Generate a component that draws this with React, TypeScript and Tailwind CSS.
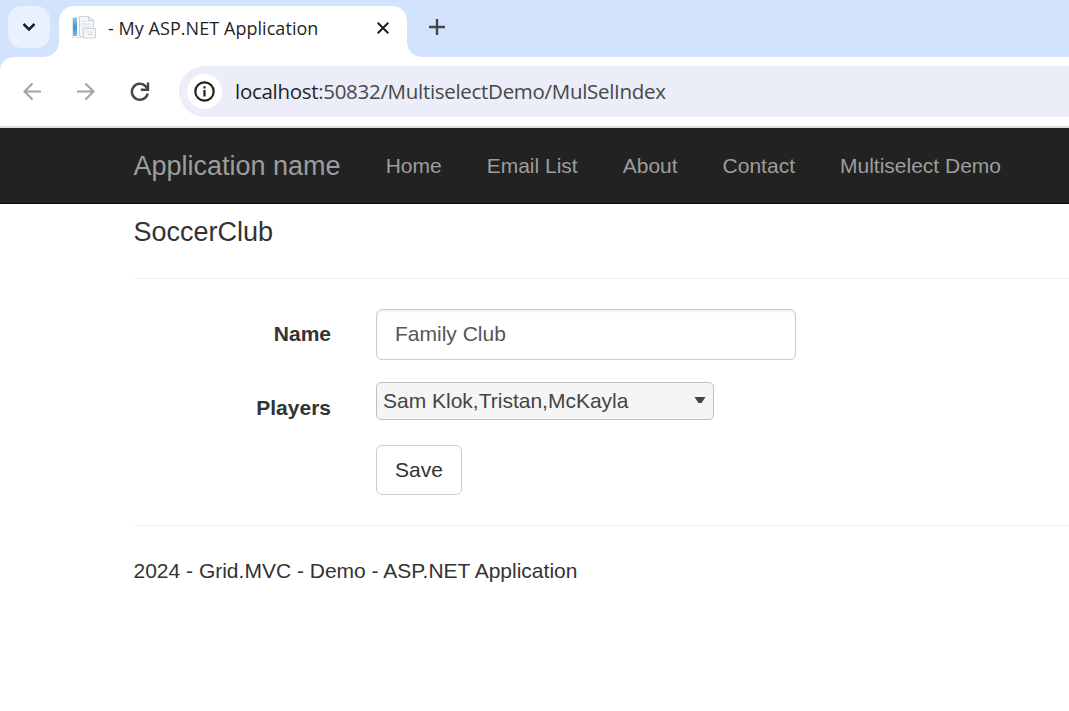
import React from "react";

const navItems = ["Home", "Email List", "About", "Contact", "Multiselect Demo"];

function Favicon() {
  return (
    <svg className="ml-[13px] shrink-0" width="24" height="26" viewBox="0 0 24 26" fill="none">
      <defs>
        <linearGradient id="spine" x1="0" y1="0" x2="0" y2="1">
          <stop offset="0" stopColor="#8cc6e6" />
          <stop offset="0.5" stopColor="#4493cb" />
          <stop offset="1" stopColor="#7cb8de" />
        </linearGradient>
      </defs>
      <rect x="0.5" y="2.5" width="13" height="20" fill="#f7f9fb" stroke="#e2e6ea" />
      <rect x="1" y="3" width="4" height="18" fill="url(#spine)" />
      <path d="M7.5 1.5h9l5 4v16h-14z" fill="#f5f6f8" stroke="#d0d4d9" />
      <path d="M16.5 1.5v4h5" stroke="#c9cdd2" />
      <path d="M9.5 6h5M9.5 9h9M9.5 12h9M9.5 15h2M9.5 18h1" stroke="#dcdfe3" />
      <path d="M11.5 13.500h12v9.500h-12z" fill="#f6f8fb" stroke="#ccd1d7" />
      <path d="M14 17h7M16 19.500h5" stroke="#d0d5da" />
    </svg>
  );
}

function TabStrip() {
  return (
    <div className="flex h-[57px] bg-[#d3e2fd]">
      <button className="mt-[6px] ml-2 flex h-[42px] w-[42px] shrink-0 items-center justify-center rounded-[14px] bg-[#e9f1fe]">
        <svg width="14" height="10" viewBox="0 0 14 10" fill="none">
          <path d="M1.500 2l5.500 5.500L12.500 2" stroke="#1f1f1f" strokeWidth="2.500" />
        </svg>
      </button>
      <div className="relative mt-[6px] ml-[9px] flex h-[51px] w-[348px] shrink-0 rounded-t-[15px] bg-white">
        <svg className="absolute bottom-0 -left-[15px]" width="15" height="15" viewBox="0 0 15 15">
          <path d="M15 0A15 15 0 0 1 0 15H15z" fill="#fff" />
        </svg>
        <svg className="absolute -right-[15px] bottom-0" width="15" height="15" viewBox="0 0 15 15">
          <path d="M0 0A15 15 0 0 0 15 15H0z" fill="#fff" />
        </svg>
        <div className="flex h-[43px] w-full items-center">
          <Favicon />
          <span className="ml-3 flex-1 whitespace-nowrap font-['Open_Sans','Noto_Sans',sans-serif] text-[18px] tracking-[0.05px] text-[#1f1f1f]">
            - My ASP.NET Application
          </span>
          <svg className="mr-[18px] shrink-0" width="12" height="12" viewBox="0 0 12 12">
            <path d="M0.700 0.700l10.600 10.600M11.300 0.700L0.700 11.300" stroke="#1f1f1f" strokeWidth="2" />
          </svg>
        </div>
      </div>
      <svg className="mt-[19px] ml-[22px] shrink-0" width="16" height="16" viewBox="0 0 16 16">
        <path d="M8 0v16M0 8h16" stroke="#444746" strokeWidth="2.400" />
      </svg>
    </div>
  );
}

function Toolbar() {
  return (
    <div className="bg-[#d3e2fd]">
      <div className="flex h-[71px] items-center rounded-tl-[14px] border-b-2 border-[#dedfe1] bg-white">
        <svg className="ml-[23px] shrink-0" width="19" height="18" viewBox="0 0 19 18" fill="none">
          <path d="M18 8.500H1.800M9.500 0.500L1.500 8.500l8 8" stroke="#a3a4a5" strokeWidth="2.200" />
        </svg>
        <svg className="ml-[35px] shrink-0" width="19" height="18" viewBox="0 0 19 18" fill="none">
          <path d="M0 8.500h16.200M8.500 0.500l8 8-8 8" stroke="#a3a4a5" strokeWidth="2.200" />
        </svg>
        <svg className="ml-[34px] shrink-0" width="20" height="20" viewBox="0 0 20 20" fill="none">
          <path d="M17.700 11.500A8 8 0 1 1 15.700 4.300L18 6.700" stroke="#444746" strokeWidth="2.500" />
          <path d="M18 0.500v7.200h-7.200" stroke="#444746" strokeWidth="2.400" />
        </svg>
        <div className="ml-[29px] flex h-[51px] flex-1 items-center rounded-l-full bg-[#ebeef8]">
          <span className="ml-2 flex h-[35px] w-[35px] shrink-0 items-center justify-center rounded-full bg-white">
            <svg width="21" height="21" viewBox="0 0 21 21" fill="none">
              <circle cx="10.500" cy="10.500" r="9.200" stroke="#1f1f1f" strokeWidth="2.200" />
              <path d="M10.500 9v6.500M10.500 5.300v2.200" stroke="#1f1f1f" strokeWidth="2.200" />
            </svg>
          </span>
          <span className="mb-[2px] ml-[13px] whitespace-nowrap font-['Open_Sans','Noto_Sans',sans-serif] text-[20.500px] tracking-[-0.300px] text-[#474747]">
            <span className="text-[#1f1f1f]">localhost</span>:50832/MultiselectDemo/MulSelIndex
          </span>
        </div>
      </div>
    </div>
  );
}

export default function App() {
  return (
    <div className="h-[711px] w-full overflow-hidden bg-white font-['Liberation_Sans',Arial,sans-serif] text-[21px] leading-[30px] text-[#333]">
      <TabStrip />
      <Toolbar />
      <nav className="flex h-[76px] items-center gap-[45px] border-b border-[#080808] bg-[#222] pl-[133.500px] whitespace-nowrap text-[#9d9d9d]">
        <span className="text-[27px]">Application name</span>
        {navItems.map((item) => (
          <a key={item}>{item}</a>
        ))}
      </nav>
      <main className="pl-[133.500px]">
        <h4 className="pt-[13px] text-[27px] leading-[30px]">SoccerClub</h4>
        <hr className="mt-[31px] border-[#eee]" />
        <div className="mt-[30px] flex">
          <label className="w-[197.500px] pt-[10px] text-right font-bold">Name</label>
          <input
            className="ml-[45px] h-[51px] w-[420px] rounded-[6px] border border-[#ccc] bg-white px-[18px] pb-[2px] text-[21px] text-[#555] shadow-[inset_0_1.5px_1.5px_rgba(0,0,0,0.075)]"
            defaultValue="Family Club"
          />
        </div>
        <div className="mt-[22px] flex h-[41px]">
          <label className="w-[197.500px] pt-[11px] text-right font-bold">Players</label>
          <button className="ml-[45px] flex h-[38px] w-[338px] items-center justify-between rounded-[5px] border border-[#bfbfbf] bg-[#f5f5f5] pr-[7px] pl-[6px] text-[#444]">
            <span>Sam Klok,Tristan,McKayla</span>
            <svg className="mb-[2px]" width="12" height="8" viewBox="0 0 12 8">
              <path d="M0.500 1h11L7.500 7h-3z" fill="#444" />
            </svg>
          </button>
        </div>
        <button className="mt-[22px] ml-[242.500px] block h-[50px] w-[86px] rounded-[6px] border border-[#ccc] bg-white text-[#333]">
          Save
        </button>
        <hr className="mt-[30px] border-[#eee]" />
        <footer className="mt-[30px]">2024 - Grid.MVC - Demo - ASP.NET Application</footer>
      </main>
    </div>
  );
}
